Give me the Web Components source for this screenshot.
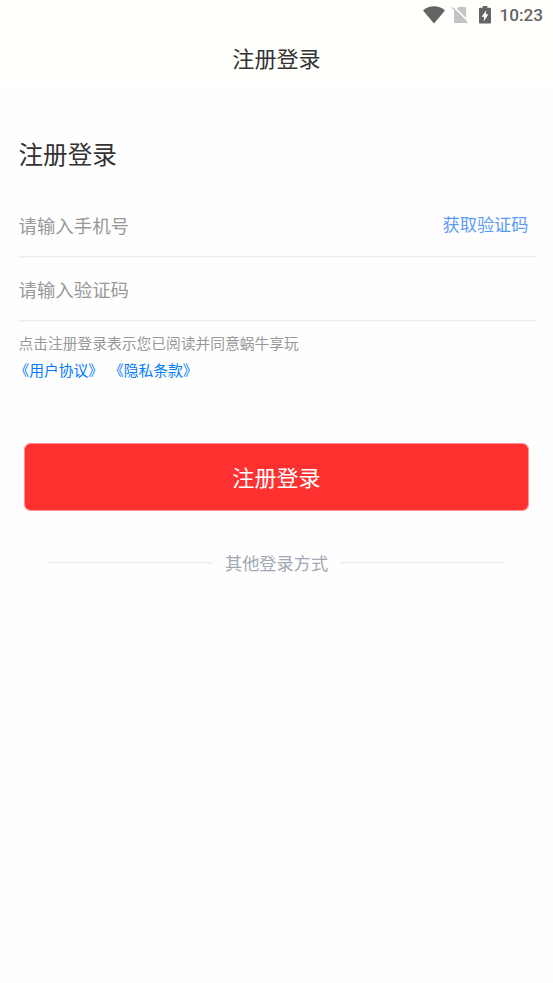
<!DOCTYPE html>
<html lang="zh-CN">
<head>
<meta charset="utf-8">
<title>注册登录</title>
<style>
html,body{margin:0;height:100%;background:#fefefe}
body{font-family:"Noto Sans CJK SC",sans-serif;overflow:hidden}
</style>
</head>
<body>
<login-page></login-page>
<script>
const define = (name, html) => {
  const template = document.createElement('template');
  template.innerHTML = html;
  customElements.define(name, class extends HTMLElement {
    constructor() {
      super();
      this.attachShadow({ mode: 'open' }).append(template.content.cloneNode(true));
    }
  });
};

define('status-bar', `
<style>
:host{display:flex;height:30px;box-sizing:border-box;padding-right:10px;justify-content:flex-end;align-items:center;color:#646464;font:500 17.2px/31px Roboto,sans-serif}
svg{display:block;flex:none;margin-top:-1px}
.wifi{margin-right:7px}.sim{margin-right:11px}.battery{margin-right:8px}
</style>
<svg class="wifi" width="22" height="18" viewBox="0 0 22 18"><path fill="#646464" d="M0 4.4C6.3-1 15.7-1 22 4.4L11 17.6Z"/></svg>
<svg class="sim" width="16" height="18" viewBox="0 0 16 18"><path fill="#c4c4c4" d="M6.4 1H13Q14.2 1 14.2 2.2V16Q14.2 17 13 17H3.2Q2 17 2 15.8V5.4Z"/><path d="M1.4 .4 16 15" stroke="#fffffc" stroke-width="1.6"/><path d="M.4 1.5 15.4 17.2" stroke="#c4c4c4" stroke-width="1.5"/></svg>
<svg class="battery" width="12" height="18" viewBox="0 0 12 18"><path fill="#646464" d="M3.7 0H8.3V1.8H11Q12 1.8 12 2.8V16.6Q12 17.6 11 17.6H1Q0 17.6 0 16.6V2.8Q0 1.8 1 1.8H3.7Z"/><path fill="#fffffc" d="M7.4 4.2 6.8 8.2H9.4L4.6 15.4 5.2 10.8H2.6Z"/></svg>
<span>10:23</span>`);

define('nav-bar', `
<style>:host{display:block;height:54px;text-align:center;font-size:22.12px;line-height:55px;color:#333}</style>
<slot></slot>`);

define('form-field', `
<style>
:host{display:flex;height:64px;box-sizing:border-box;border-bottom:1px solid #ebebeb;box-shadow:0 1px #f9f9f9;align-items:center;justify-content:space-between;padding-right:6px;font-size:18.43px;line-height:27px;color:#999}
span{margin-top:1px}
::slotted([slot=action]){display:block;font-size:17.2px;line-height:25px;margin-top:-2px;color:#5c9af8}
</style>
<span><slot></slot></span><slot name="action"></slot>`);

define('user-agreement', `
<style>
:host{display:block;padding-top:8.5px;font-size:14.75px;line-height:26.5px;color:#999}
div{white-space:nowrap}
.links{display:flex;gap:6px;color:#007aff;margin-left:-4px;padding-top:.5px}
</style>
<div>点击注册登录表示您已阅读并同意蜗牛享玩</div>
<div class="links"><span>《用户协议》</span><span>《隐私条款》</span></div>`);

define('submit-button', `
<style>
:host{display:block}
button{display:block;box-sizing:border-box;width:100%;height:68px;padding:0 0 2px;border:1px solid #ff9292;border-radius:6px;background:#ff3030;background-clip:padding-box;color:#fff;font:inherit;font-size:22.12px;line-height:64px;text-align:center}
</style>
<button><slot></slot></button>`);

define('section-divider', `
<style>
:host{display:flex;align-items:center;gap:12.3px;color:#a1a8b3;font-size:17.2px;line-height:26px}
i{flex:1;height:1px;background:#ededed;box-shadow:0 1px #f8f8f8;margin-top:-1px}
</style>
<i></i><span><slot></slot></span><i></i>`);

define('login-page', `
<style>
:host{display:block;height:983px}
header{background:#fffffc}
main{padding:0 18.5px}
h1{margin:0;padding-top:51px;font-size:24.58px;font-weight:400;line-height:36px;color:#333}
.fields{padding-top:22px}
submit-button{margin:60px 5.5px 0}
section-divider{margin:39px 30.4px 0}
</style>
<header><status-bar></status-bar><nav-bar>注册登录</nav-bar></header>
<main>
<h1>注册登录</h1>
<div class="fields">
<form-field>请输入手机号<span slot="action">获取验证码</span></form-field>
<form-field>请输入验证码</form-field>
</div>
<user-agreement></user-agreement>
<submit-button>注册登录</submit-button>
<section-divider>其他登录方式</section-divider>
</main>`);
</script>
</body>
</html>
